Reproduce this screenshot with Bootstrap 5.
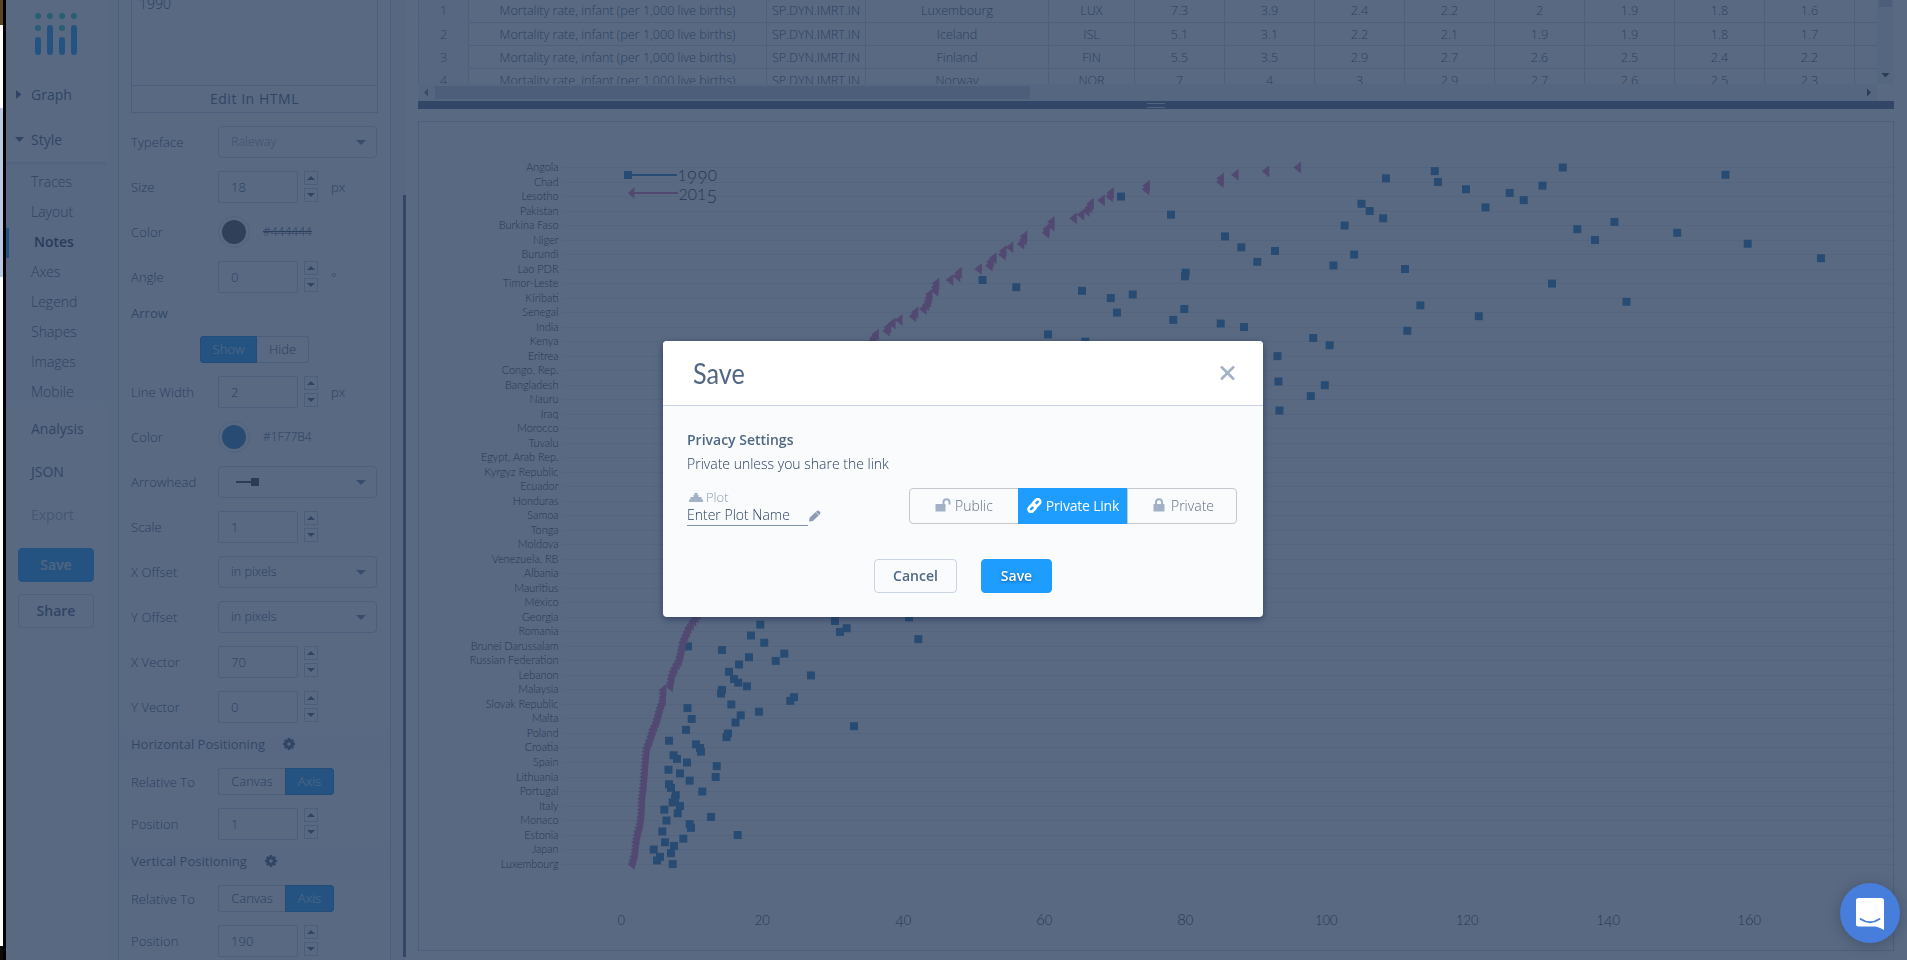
<!DOCTYPE html>
<html lang="en">
<head>
<meta charset="utf-8">
<title>Chart editor – Save</title>
<link href="https://cdn.jsdelivr.net/npm/bootstrap@5.3.0/dist/css/bootstrap.min.css" rel="stylesheet">
<script src="https://cdn.jsdelivr.net/npm/bootstrap@5.3.0/dist/js/bootstrap.bundle.min.js"></script>
<style>
html,body{height:960px;overflow:hidden}
body{font-family:"Open Sans","Noto Sans",sans-serif;font-size:14px;line-height:20px;color:#2a3f5f;background:#fff}
svg{display:block;flex:none}
.edge-photo{width:3px;background:linear-gradient(#5b4526 0 25px,#fff 25px 108px,#bcc8e2 108px 277px,#fff 277px 946px,#0c0a08 946px)}
.edge-line{width:3px;background:#000}
/* left menu */
.side-menu{width:100px;background:#fff}
.gutter{width:12px;background:#f5f8fb}
.logo-box{height:72px;padding:13px 0 0 29px}
.menu-item{height:45px;padding-left:25px;display:flex;align-items:center;position:relative;color:#44597a}
.menu-item svg{position:absolute}
.sub-menu{background:#f7f9fc;height:244px;padding-top:5px;border-top:1px solid #d3dde9;box-shadow:inset 0 2px 2px #e9eef5;margin-bottom:1px}
.sub-item{height:30px;line-height:28px;padding-left:25px;font-weight:300;color:#3a4f70}
.sub-item.chosen{font-weight:600;padding-left:25px;border-left:3px solid #119dff;color:#1c2f4e}
.side-btn{width:76px;height:34px;margin-left:12px;border-radius:4px;padding:0;font-weight:600;font-size:14px;line-height:1;color:#44597a;border:1px solid #c8d4e3;display:flex;align-items:center;justify-content:center}
.side-btn.blue{background:#119dff;border-color:#119dff;color:#dfe6ee}
/* settings panel */
.settings{width:273px;border:solid #bdcbe4;border-width:0 1px;height:960px;overflow:hidden;background:#fdfeff}
.note-box{height:113px;margin:0 12px;border:1px solid #bdcbe4;border-top:0;width:247px}
.note-text{height:86px;padding-left:7px;line-height:8px;font-weight:300;border-bottom:1px solid #bdcbe4}
.note-edit{line-height:26px;text-align:center;letter-spacing:.55px;color:#44597a}
.field-row{height:45px;padding:6px 0 0 12px;display:flex}
.field-row.seg{height:40px}
.field-row>label{width:87px;font-size:13px;font-weight:300;line-height:32px;height:32px;letter-spacing:.1px}
.field-row.seg>label{line-height:28px}
.num{width:80px;height:32px;border:1px solid #bdcbe4;border-radius:2px;padding-left:12px;font-size:13px;font-weight:300;line-height:30px;letter-spacing:.1px}
.pick{width:159px;height:32px;border:1px solid #bdcbe4;border-radius:4px;padding:0 10px 0 12px;font-size:12.5px;font-weight:300;display:flex;align-items:center;justify-content:space-between}
.steps{margin-left:6px;display:flex;flex-direction:column;gap:3px}
.steps i{width:14px;height:14px;border:1px solid #bdcbe4;display:flex;align-items:center;justify-content:center}
.steps i::before{content:"";border:4.5px solid transparent;border-top:0;border-bottom:4.5px solid #44597a}
.steps i+i::before{border-top:4.5px solid #44597a;border-bottom:0}
.caret{border:5px solid transparent;border-top:5px solid #6a7f9b;border-bottom:0}
.unit{margin-left:13px;font-size:13px;font-weight:300;line-height:32px}
.swatch{width:32px;height:32px;border:1px solid #d3deeb;border-radius:50%;padding:3px;background-clip:content-box}
.sec-head{font-size:13px;padding:0 0 4px 12px;display:flex;align-items:center;letter-spacing:.02px;background:#f9fbfd;color:#506784}
.sec-head svg{margin-left:18px}
.seg-group{height:27px;font-size:13px;font-weight:300;display:flex;line-height:25px;text-align:center}
.seg-group span{border:1px solid #bdcbe4}
.seg-group span:first-child{border-radius:3px 0 0 3px}
.seg-group span:last-child{border-radius:0 3px 3px 0}
.seg-group .on{background:#119dff;border-color:#0b7fd4;color:#e8eef6;font-weight:300}
.scroll-strip{width:15px;background:#f3f6fa;padding:195px 0 3px 12px}
.scroll-strip div{height:100%;width:3px;background:#506784}
/* data grid */
.work{margin-left:12px;width:1476px}
.sheet-wrap{height:84px;overflow:hidden;display:flex}
.sheet{table-layout:fixed;width:1526px;border-collapse:collapse;margin-top:-1px;font-size:12.600px;text-align:center;font-weight:300;color:#2a3f5f}
.sheet-view{width:1459px;overflow:hidden}
.sheet td{height:23px;padding:1px 0 0;line-height:21px;border:1px solid #c3cfe0;border-width:0 1px 1px 0;white-space:nowrap}
.sheet td:first-child{background:#f3f6fa;border-bottom-color:#f3f6fa;color:#506784;border-left:1px solid #c3cfe0}
.vbar{width:17px;background:#eef1f5}
.hbar{height:17px;width:1459px;background:#eef1f5;display:flex;align-items:center}
.hbar .thumb{width:595px;height:13px;background:#c4cbd6}
.splitter{height:8px;background:#506784;display:flex;justify-content:center}
.splitter i{width:18px;height:5px;margin-top:2px;border:solid #dbe3ec;border-width:1px 0}
.plot-box{margin-top:12px;height:830px;border:1px solid #bdcbe4}
.plot-box text{font-family:Lato,"Open Sans",sans-serif;font-weight:300;fill:#111}
/* dialog */
.veil{position:fixed;left:6px;top:0;width:1914px;height:960px;background:rgba(42,63,95,.78)}
.veil .modal-dialog{width:600px;max-width:600px;margin:341px auto 0}
.veil .modal-content{height:276px;border:0;border-radius:4px;background:#f9fbfd;box-shadow:0 2px 7px rgba(20,35,70,.55)}
.veil .modal-header{height:65px;background:#fff;border-bottom:1px solid #c8d4e3;border-radius:4px 4px 0 0;padding:0 28px 0 30px}
.veil h1{font:400 29px/64px Lato,sans-serif;color:#506784;margin:0;height:64px;transform:scaleX(.87);transform-origin:0 0}
.veil .modal-body{padding:24px 24px 0;color:#2a3f5f}
.plot-name{width:121px;border-bottom:1px solid #8391ac;font-weight:300;line-height:17px;height:20px}
.privacy{width:328px;height:36px}
.privacy .btn{width:110px;flex:none;padding:0 0 2px;border:1px solid #c5c9cf;border-radius:4px;background:#f9fbfd;color:#65718a;font-size:14px;font-weight:300;display:flex;align-items:center;justify-content:center;gap:4px}
.privacy .btn.on{background:#1e9dff;border-color:#1e9dff;color:#fff;font-weight:400;letter-spacing:-.2px}
.foot-btn{height:34px;border-radius:4px;font-size:14px;font-weight:600;padding:0;line-height:32px;color:#506784;border:1px solid #c8d4e3}
.foot-btn.blue{background:#1e9dff;border-color:#1e9dff;color:#fff;text-shadow:0 1px 3px rgba(0,30,80,.5)}
.chat-bubble{position:fixed;left:1840px;top:883px;width:60px;height:60px;border-radius:50%;background:#477edb;box-shadow:0 2px 14px rgba(30,40,60,.35);padding:15px 16px;z-index:1100}
</style>
</head>
<body>
<div class="d-flex h-100">
  <div class="edge-photo"></div><div class="edge-line"></div>

  <nav class="side-menu flex-shrink-0">
    <div class="logo-box">
      <svg width="42" height="42"><g fill="#20c9b5"><circle cx="3" cy="3" r="3"/><circle cx="15" cy="3" r="3"/><circle cx="27" cy="3" r="3"/><circle cx="39" cy="3" r="3"/><circle cx="3" cy="15" r="3"/><circle cx="27" cy="15" r="3"/></g><g fill="#119dff"><rect y="24" width="6" height="18" rx="3"/><rect x="12" y="12" width="6" height="30" rx="3"/><rect x="24" y="24" width="6" height="18" rx="3"/><rect x="36" y="12" width="6" height="30" rx="3"/></g></svg>
    </div>
    <div class="menu-item"><svg style="left:10px" width="6" height="9"><path d="M0 0l5.500 4.500L0 9z" fill="#44597a"/></svg>Graph</div>
    <div class="menu-item"><svg style="left:9px" width="9" height="5"><path d="M0 0h9L4.500 5z" fill="#44597a"/></svg>Style</div>
    <div class="sub-menu">
      <div class="sub-item">Traces</div><div class="sub-item">Layout</div><div class="sub-item chosen">Notes</div><div class="sub-item">Axes</div><div class="sub-item">Legend</div><div class="sub-item">Shapes</div><div class="sub-item">Images</div><div class="sub-item">Mobile</div>
    </div>
    <div class="menu-item" style="height:43px">Analysis</div>
    <div class="menu-item" style="height:43px">JSON</div>
    <div class="menu-item opacity-50" style="height:43px">Export</div>
    <button class="btn side-btn blue" style="margin-top:12px">Save</button>
    <button class="btn side-btn" style="margin-top:12px">Share</button>
  </nav>
  <div class="gutter flex-shrink-0"></div>

  <section class="settings flex-shrink-0">
    <div class="note-box"><div class="note-text">1990</div><div class="note-edit">Edit In HTML</div></div>
    <div style="height:7px"></div>
    <div class="field-row"><label>Typeface</label><div class="pick" style="color:#7d8ea6">Raleway<i class="caret"></i></div></div>
    <div class="field-row"><label>Size</label><div class="num">18</div><div class="steps"><i></i><i></i></div><span class="unit">px</span></div>
    <div class="field-row"><label>Color</label><div class="swatch" style="background-color:#444"></div><span class="unit text-decoration-line-through" style="font-size:12px">#444444</span></div>
    <div class="field-row"><label>Angle</label><div class="num">0</div><div class="steps"><i></i><i></i></div><span class="unit">°</span></div>
    <div class="sec-head" style="height:30px;background:none">Arrow</div>
    <div class="d-flex justify-content-center" style="height:40px;padding:6px 0 0 0"><div class="seg-group"><span class="on" style="width:57px">Show</span><span style="width:52px;border-left:0">Hide</span></div></div>
    <div class="field-row"><label>Line Width</label><div class="num">2</div><div class="steps"><i></i><i></i></div><span class="unit">px</span></div>
    <div class="field-row"><label>Color</label><div class="swatch" style="background-color:#1f77b4"></div><span class="unit" style="font-size:12px">#1F77B4</span></div>
    <div class="field-row"><label>Arrowhead</label><div class="pick"><svg width="28" height="8" style="margin-left:4px"><path d="M1 4h16" stroke="#333" stroke-width="2"/><path d="M16 0h8v8h-8z" fill="#333"/></svg><i class="caret"></i></div></div>
    <div class="field-row"><label>Scale</label><div class="num">1</div><div class="steps"><i></i><i></i></div></div>
    <div class="field-row"><label>X Offset</label><div class="pick">in pixels<i class="caret"></i></div></div>
    <div class="field-row"><label>Y Offset</label><div class="pick">in pixels<i class="caret"></i></div></div>
    <div class="field-row"><label>X Vector</label><div class="num">70</div><div class="steps"><i></i><i></i></div></div>
    <div class="field-row"><label>Y Vector</label><div class="num">0</div><div class="steps"><i></i><i></i></div></div>
    <div class="sec-head" style="height:32px">Horizontal Positioning<svg width="12" height="12" viewBox="-6 -6 12 12"><circle r="3.200" fill="none" stroke="#44597a" stroke-width="3"/><path d="M0-6V-4M0 6V4M-6 0H-4M6 0H4M-4.200-4.200L-3-3M4.200 4.200L3 3M-4.200 4.200L-3 3M4.200-4.200L3-3" stroke="#44597a" stroke-width="2.600"/></svg></div>
    <div class="field-row seg"><label>Relative To</label><div class="seg-group"><span style="width:67px;border-right:0">Canvas</span><span class="on" style="width:49px">Axis</span></div></div>
    <div class="field-row"><label>Position</label><div class="num">1</div><div class="steps"><i></i><i></i></div></div>
    <div class="sec-head" style="height:32px">Vertical Positioning<svg width="12" height="12" viewBox="-6 -6 12 12"><circle r="3.200" fill="none" stroke="#44597a" stroke-width="3"/><path d="M0-6V-4M0 6V4M-6 0H-4M6 0H4M-4.200-4.200L-3-3M4.200 4.200L3 3M-4.200 4.200L-3 3M4.200-4.200L3-3" stroke="#44597a" stroke-width="2.600"/></svg></div>
    <div class="field-row seg"><label>Relative To</label><div class="seg-group"><span style="width:67px;border-right:0">Canvas</span><span class="on" style="width:49px">Axis</span></div></div>
    <div class="field-row"><label>Position</label><div class="num">190</div><div class="steps"><i></i><i></i></div></div>
  </section>
  <div class="scroll-strip flex-shrink-0"><div></div></div>

  <main class="work flex-shrink-0">
    <div class="sheet-wrap">
      <div class="sheet-view"><table class="sheet"><colgroup><col style="width:50px"><col style="width:298px"><col style="width:99px"><col style="width:183px"><col style="width:86px"><col span="9" style="width:90px"></colgroup><tbody id="rows"></tbody></table></div>
      <div class="vbar"><svg width="17" height="84"><path d="M2 0h13v7H2z" fill="#c4cbd6"/><path d="M4.500 73h8l-4 4.500z" fill="#333"/></svg></div>
    </div>
    <div class="hbar"><svg width="17" height="17"><path d="M10 4.500v8L6 8.500z" fill="#777"/></svg><div class="thumb"></div><svg class="ms-auto" width="17" height="17"><path d="M7 4.500v8l4-4z" fill="#333"/></svg></div>
    <div class="splitter"><i></i></div>
    <div class="plot-box"><svg id="plot" width="1474" height="828" viewBox="419 122 1474 828"></svg></div>
  </main>
</div>

<div class="veil">
  <div class="modal-dialog"><div class="modal-content">
    <div class="modal-header"><h1>Save</h1><svg width="15" height="14" viewBox="0 0 15 14"><path d="M1 .5l13 13M14 .5l-13 13" stroke="#a2b1c6" stroke-width="2.600"/></svg></div>
    <div class="modal-body">
      <div class="fw-semibold" style="color:#506784">Privacy Settings</div>
      <div class="fw-light" style="margin-top:4px">Private unless you share the link</div>
      <div class="d-flex justify-content-between" style="margin-top:14px;padding-right:2px">
        <div>
          <div class="d-flex align-items-center" style="height:18px;color:#8c9db6;font-size:13px;font-weight:300"><svg width="14" height="9" style="margin:0 3px 0 2px"><path d="M0 9V6.500h1.500V4h3V2h1V0h3v2h1v2h3v2.500H14V9z" fill="#a2b1c6"/></svg>Plot</div>
          <div class="d-flex align-items-center"><div class="plot-name">Enter Plot Name</div><svg width="14" height="12" viewBox="0 0 14 12"><path d="M1 11.500l.6-3.800 7-6.500q1.300-1.200 2.500-.2l.9.900q1 1.200-.1 2.300l-7 6.700z" fill="#8e9ab3"/><path d="M7.800 2.200l3.200 3.100" stroke="#f9fbfd" stroke-width=".7"/></svg></div>
        </div>
        <div class="btn-group privacy">
          <button class="btn"><svg width="16" height="14" viewBox="0 0 16 14"><path d="M.5 6h10v7.500H.5z" fill="#a2b1c6"/><path d="M8.500 6.500V4.300a3 3 0 0 1 6 0V6.500" fill="none" stroke="#a2b1c6" stroke-width="2"/></svg>Public</button>
          <button class="btn on"><svg width="15" height="15" viewBox="0 0 15 15" fill="none" stroke="#fff" stroke-width="2.600"><rect x="-4.200" y="-2.500" width="8.400" height="5" rx="2.500" transform="translate(9.600 4.900) rotate(-45)"/><rect x="-4.200" y="-2.500" width="8.400" height="5" rx="2.500" transform="translate(5.200 10) rotate(-45)"/></svg>Private Link</button>
          <button class="btn"><svg width="12" height="14" viewBox="0 0 12 14" style="margin:0 2px 0 3px"><path d="M.5 6h11v7.500H.5z" fill="#a2b1c6"/><path d="M3 6.500V4.200a3 3 0 0 1 6 0V6.500" fill="none" stroke="#a2b1c6" stroke-width="2"/></svg>Private</button>
        </div>
      </div>
      <div class="d-flex justify-content-center" style="gap:24px;margin-top:33px"><button class="btn foot-btn" style="width:83px">Cancel</button><button class="btn foot-btn blue" style="width:71px">Save</button></div>
    </div>
  </div></div>
</div>
<div class="chat-bubble"><svg width="28" height="32"><path d="M2.500 0h23A2.500 2.500 0 0 1 28 2.500V32q-6-3.300-9-3.500H2.500A2.500 2.500 0 0 1 0 26V2.500A2.500 2.500 0 0 1 2.500 0z" fill="#fff"/><path d="M4.500 21q9.500 6.500 19 0" fill="none" stroke="#477edb" stroke-width="1.800" stroke-linecap="round"/></svg></div>

<script>
// data grid rows
const data = [
 ['Luxembourg','LUX',7.3,3.9,2.4,2.2,2,1.9,1.8,1.6],
 ['Iceland','ISL',5.1,3.1,2.2,2.1,1.9,1.9,1.8,1.7],
 ['Finland','FIN',5.5,3.5,2.9,2.7,2.6,2.5,2.4,2.2],
 ['Norway','NOR',7,4,3,2.9,2.7,2.6,2.5,2.3]];
document.getElementById('rows').innerHTML = data.map((r,i)=>'<tr>'+[i+1,'Mortality rate, infant (per 1,000 live births)','SP.DYN.IMRT.IN',...r,''].map(c=>`<td>${c}</td>`).join('')+'</tr>').join('');

// dot plot: every fourth country is labelled
const names='Angola;Chad;Lesotho;Pakistan;Burkina Faso;Niger;Burundi;Lao PDR;Timor-Leste;Kiribati;Senegal;India;Kenya;Eritrea;Congo, Rep.;Bangladesh;Nauru;Iraq;Morocco;Tuvalu;Egypt, Arab Rep.;Kyrgyz Republic;Ecuador;Honduras;Samoa;Tonga;Moldova;Venezuela, RB;Albania;Mauritius;México;Georgia;Romania;Brunei Darussalam;Russian Federation;Lebanon;Malaysia;Slovak Republic;Malta;Poland;Croatia;Spain;Lithuania;Portugal;Italy;Monaco;Estonia;Japan;Luxembourg'.split(';');
const Y=k=>167.5+3.628*k;
// old-style figures: 0 1 2 are low, 3 4 5 7 9 hang below the baseline, 6 8 rise
const oldStyle=(t,f)=>{let off=0;return [...t].map(c=>{const d='34579'.includes(c)?f*.17:0,dy=d-off;off=d;return `<tspan dy="${dy.toFixed(2)}" font-size="${'012'.includes(c)?f*.88:f}">${c}</tspan>`}).join('')};
let s='';
names.forEach((n,i)=>{const y=Math.round(Y(i*4)-.5)+.5;
 s+=`<path d="M562 ${y}H1893" stroke="#eaeef2"/><text x="558.500" y="${y+3.5}" font-size="10.900" text-anchor="end">${n}</text>`});
for(let i=0;i<9;i++) s+=`<text x="${621.3+i*141}" y="924.500" text-anchor="middle">${oldStyle(String(i*20),14.8)}</text>`;
const sq={0:1562.8,1:1434.8,2:1725.5,3:1386,4:1438,5:1542.5,6:1466,7:1509.7,8:1121,9:1523.7,10:1361.5,11:1485.5,12:1369.7,13:1171,14:1383.2,15:1614.4,16:1344.6,17:1577.3,18:1677.2,19:1225,20:1595,21:1747.7,22:1241.3,23:1275,24:1354.2,25:1821,26:1257.3,27:1333.5,28:1405,29:1185.7,30:1185,31:982.5,32:1552,33:1016.3,34:1082,35:1132.7,36:1110.8,37:1626.5,38:1420.4,39:1184.3,40:1117,41:1478.8,42:1173.3,43:1220.7,44:1244,45:1407.3,46:1048,47:1313.2,48:1085.3,49:1329.6,52:1277.5,59:1278.4,60:1324.8,63:1310.8,67:1279.4,124:909,125:835,126:760.3,127:846.7,128:840,129:751,130:918.3,131:764.3,132:688,133:722,134:784.3,135:749,136:775.7,137:739,139:729,140:811,141:734,142:738.3,143:747,144:722,145:721,146:794,147:790.3,148:731.3,149:687.5,150:759,151:740.7,152:691.7,153:735.5,154:854,155:686,156:728,157:726.5,158:669,159:696,160:700,161:701,162:673.5,163:677,164:687,165:716.7,166:668.5,167:680,168:715.7,169:689.7,170:669,171:671,172:702.3,173:675.7,174:675,175:672.7,176:680,177:664.3,178:677.7,179:711,180:666.5,181:689.7,182:691,183:662.3,184:737.7,185:683.3,186:665,187:674,188:653.7,189:671,190:660,191:657,192:672.7};
for(const k in sq) s+=`<rect x="${sq[k]-4}" y="${Y(k)-4}" width="8" height="8" fill="#1f77b4"/>`;
const tr=[1293.4,1261.7,1231,1216.3,1216,1142.3,1141.7,1106.3,1105.3,1097.3,1086.3,1084.7,1082,1076.7,1069.3,1047,1046.7,1042.3,1041.7,1019.7,1019,1016.7,1005.7,999,998,989,986.3,985,974.3,954.3,952.7,945.7,931.7,931,930.7,925,924.3,923.3,921.7,919,910.7,908.7,895,888,883.7,882.3,871.3,869.3];
const rest=[[47,869.3],[124,691],[127,684],[129,680.7],[131,678],[134,676],[136,674],[138,670],[140,667],[143,665.3],[144,658.7],[147,658],[149,655.3],[151,653.3],[153,651.3],[155,648],[157,646],[159,643.3],[160,642],[163,641],[166,640],[170,639],[174,637.3],[178,636.7],[181,635.3],[183,633.3],[186,631.3],[189,630.3],[191,628.3],[192,627.3]];
for(let j=1;j<rest.length;j++){const [a,u]=rest[j-1],[b,v]=rest[j];for(let k=a+1;k<=b;k++)tr[k]=u+(v-u)*(k-a)/(b-a)}
tr.forEach((x,k)=>{s+=`<path d="M${x} ${Y(k)}l7.600 -6v12z" fill="#dd6fb4"/>`});
s+=`<path d="M628 175H677" stroke="#1f77b4" stroke-width="2"/><rect x="624" y="171" width="8" height="8" fill="#1f77b4"/>
<path d="M633 193H678" stroke="#dd6fb4" stroke-width="2"/><path d="M628 193l6.500-6v12z" fill="#dd6fb4"/>
<text x="677.500" y="181" textLength="39.500" lengthAdjust="spacingAndGlyphs">${oldStyle('1990',18)}</text><text x="678.500" y="200" textLength="38.500" lengthAdjust="spacingAndGlyphs">${oldStyle('2015',18)}</text>`;
document.getElementById('plot').innerHTML=s;
</script>
</body>
</html>
